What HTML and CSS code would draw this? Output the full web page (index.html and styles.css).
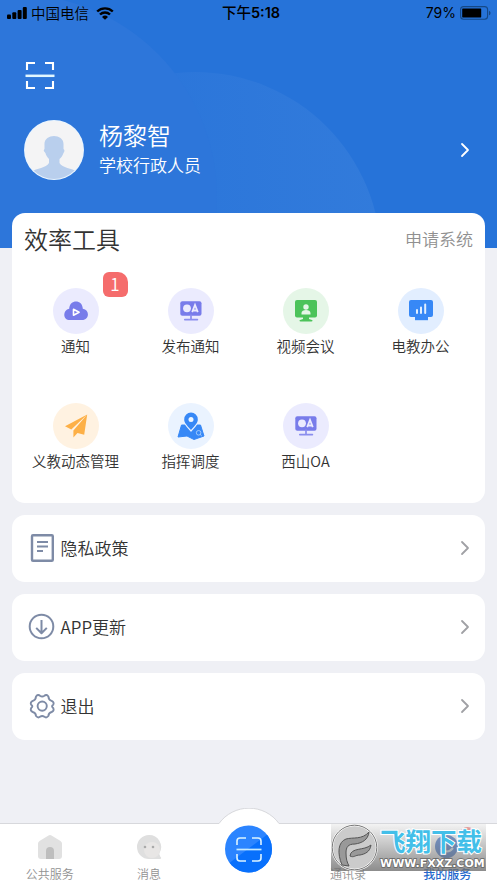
FILE: index.html
```html
<!DOCTYPE html>
<html lang="zh-CN">
<head>
<meta charset="utf-8">
<title>我的服务</title>
<link rel="stylesheet" href="styles.css">
</head>
<body>
<svg width="0" height="0" class="defs">
  <symbol id="oa" viewBox="0 0 22 20"><rect x=".3" y=".3" width="21.2" height="14.4" rx="2" fill="#787cea"/><circle cx="7" cy="7.3" r="3.9" fill="#ebebfe"/><path d="M12.2 11.200 15 4l2.800 7.200M13.600 9.500h3" fill="none" stroke="#ebebfe" stroke-width="1.800"/><path d="M11 14v4M4.800 18.600h12.600" stroke="#8b8eee" stroke-width="1.700" stroke-linecap="round"/></symbol>
  <symbol id="arrow" viewBox="0 0 10 16"><path d="m2 2 6 6-6 6" fill="none" stroke="currentColor" stroke-width="1.800" stroke-linecap="round" stroke-linejoin="round"/></symbol>
</svg>
<main class="app">
  <header class="hero">
    <svg class="hero-bg" viewBox="0 0 497 248">
      <defs>
        <linearGradient id="g2" x1="0" x2="1"><stop offset=".3" stop-color="#2a75da"/><stop offset="1" stop-color="#327bdb"/></linearGradient>
      </defs>
      <circle cx="195" cy="258" r="186" fill="url(#g2)"/>
      <circle cx="14" cy="197" r="203" fill="#2d76da"/>
    </svg>
    <div class="status">
      <div class="carrier">
        <svg width="20" height="12" viewBox="0 0 20 12"><rect y="7.500" width="4" height="4.500" rx="1"/><rect x="5.300" y="5.300" width="4" height="6.700" rx="1"/><rect x="10.600" y="3" width="4" height="9" rx="1"/><rect x="15.800" width="4" height="12" rx="1"/></svg>
        <span>中国电信</span>
        <svg class="wifi" width="18" height="13" viewBox="0 0 18 13"><path d="M1.200 4.500a11.300 11.300 0 0 1 15.600 0M4 7.500a7.200 7.200 0 0 1 10 0" fill="none" stroke="#000" stroke-width="2.400"/><path d="M6 9.900a4.400 4.400 0 0 1 6 0l-3 2.900z"/></svg>
      </div>
      <span class="time">下午<b>5:18</b></span>
      <div class="power"><span>79%</span>
        <svg width="31" height="14" viewBox="0 0 31 14"><rect x=".6" y=".6" width="27" height="12.600" rx="3" fill="none" stroke="#154886" stroke-width="1.100"/><rect x="2.200" y="2.400" width="19" height="9" rx=".6"/><path d="M29 4.700c2 .8 2 3.800 0 4.600z" fill="#154886"/></svg>
      </div>
    </div>
    <svg class="scan" width="30" height="30" viewBox="0 0 30 30"><path d="M2 9V2h8M20 2h8v7M2 20v7h8M20 27h8v-7" fill="none" stroke="#fff" stroke-width="2.100"/><path d="M.5 14.800h29" stroke="#e2f7ff" stroke-width="2.500"/></svg>
    <section class="profile">
      <svg class="avatar" width="60" height="60" viewBox="0 0 60 60"><defs><clipPath id="ac"><circle cx="30" cy="30" r="29"/></clipPath></defs><circle cx="30" cy="30" r="30" fill="#e9f5ff"/><circle cx="30" cy="30" r="29" fill="#f4f4f5"/><path clip-path="url(#ac)" d="M20.500 25c-1-12 20-12 19 0v4c1 1 1.500 2 0 4-1 3-2.500 5-4 6v4c3 5 12 5 18 9v10H7V52c6-4 15-4 18-9v-4c-2-2-3-4-3.600-6-2-2-2-3-.9-4z" fill="#b9cfed"/></svg>
      <div class="who"><div class="name">杨黎智</div><div class="role">学校行政人员</div></div>
      <svg class="chev" width="10" height="16"><use href="#arrow"/></svg>
    </section>
  </header>

  <section class="card tools">
    <div class="tools-head"><h1>效率工具</h1><a>申请系统</a></div>
    <div class="grid">
      <div class="tool"><div class="disc lilac"><svg width="24" height="20" viewBox="0 0 24 20"><path d="M5.200 7.800C5.500-2 18.500-2 18.800 7.800 26 9 25.500 19 18 19H6C-1.500 19-1.500 9 5.200 7.800z" fill="#787cea"/><path d="M9.500 8.300v6l5.600-3z" fill="#787cea" stroke="#fff" stroke-width="1.600" stroke-linejoin="round"/></svg><i class="badge">1</i></div><span>通知</span></div>
      <div class="tool"><div class="disc lilac"><svg width="22" height="20"><use href="#oa"/></svg></div><span>发布通知</span></div>
      <div class="tool"><div class="disc green"><svg width="22" height="22" viewBox="0 0 22 22"><rect width="22" height="17.500" rx="2" fill="#4cc35a"/><path d="M8 17h6v2l3 1c1 .5.500 1.500-.5 1.500h-11c-1 0-1.500-1-.5-1.500l3-1z" fill="#4cc35a"/><circle cx="11" cy="7" r="2.700" fill="#e5f6e7"/><path d="M6.500 14.500V13c0-2 2-3 4.500-3s4.500 1 4.500 3v1.500z" fill="#e5f6e7"/></svg></div><span>视频会议</span></div>
      <div class="tool"><div class="disc blue"><svg width="24" height="21" viewBox="0 0 24 21"><rect width="24" height="17" rx="2" fill="#3788f6"/><path d="M6 17h13v3.200H6z" fill="#3788f6"/><path d="M8 13v-3M12 13V7.500M16.200 13V4.500" stroke="#e2efff" stroke-width="2" stroke-linecap="round"/></svg></div><span>电教办公</span></div>
      <div class="tool"><div class="disc orange"><svg width="24" height="24" viewBox="0 0 24 24"><path d="M23.200.5 1 12.300l6.300 3.200zM23.200.5 9.400 16.500v7l4.100-4.500 6.700 1.800z" fill="#fdb047"/></svg></div><span>义教动态管理</span></div>
      <div class="tool"><div class="disc sky"><svg width="28" height="28" viewBox="0 0 28 28"><path d="M4.500 13h19l3.500 11-10 3.500-7-3.500-9 1z" fill="#3788f6" stroke="#3788f6" stroke-linejoin="round"/><path d="M14 18C9.500 13 7.200 10.500 7.200 7.400a6.800 6.800 0 0 1 13.600 0C20.800 10.500 18.500 13 14 18z" fill="#3788f6" stroke="#eaf3ff" stroke-width="2.600" paint-order="stroke"/><circle cx="14" cy="7.500" r="2.500" fill="#eef6ff"/><circle cx="21.600" cy="20.800" r="2.300" fill="none" stroke="#b4d5fd" stroke-width=".8"/><path d="m23.200 22.500 1.400 1.300" stroke="#b4d5fd"/></svg></div><span>指挥调度</span></div>
      <div class="tool"><div class="disc lilac"><svg width="22" height="20"><use href="#oa"/></svg></div><span>西山OA</span></div>
    </div>
  </section>

  <section class="card row"><svg class="lead" width="28" height="28" viewBox="0 0 28 28"><rect x="4" y="1.300" width="20.800" height="25.400" rx="1" fill="none" stroke="#7e8ba6" stroke-width="2.400"/><path d="M9 8h11M9 12.500h11M9 17h6" stroke="#7e8ba6" stroke-width="2.200"/></svg><span>隐私政策</span><svg class="chev" width="10" height="16"><use href="#arrow"/></svg></section>
  <section class="card row"><svg class="lead" width="28" height="28" viewBox="0 0 28 28"><circle cx="13.500" cy="13.500" r="11.800" fill="none" stroke="#7e8ba6" stroke-width="2"/><path d="M13.500 7v13M8.200 14.900l5.300 5.300 5.300-5.300" fill="none" stroke="#7e8ba6" stroke-width="2" stroke-linejoin="round"/></svg><span>APP更新</span><svg class="chev" width="10" height="16"><use href="#arrow"/></svg></section>
  <section class="card row"><svg class="lead" width="28" height="28" viewBox="0 0 28 28"><path d="M8 4.500q2-2.500 4-.8 2.200 1.500 4.400 0 2-1.700 4 .8.200 3.500 3.200 4.300 3 1.500 1.600 4-2.300 1.500 0 3.200 1.400 2.800-1.600 4-3 .8-3.200 4-2 2.300-4 .8-2.200-1.500-4.400 0-2 1.500-4-.8-.2-3.200-3.200-4-3-1.200-1.600-4 2.300-1.700 0-3.200-1.400-2.500 1.600-4Q7.800 8 8 4.500z" fill="none" stroke="#7e8ba6" stroke-width="1.900" stroke-linejoin="round"/><circle cx="14.200" cy="14.100" r="4.600" fill="none" stroke="#7e8ba6" stroke-width="1.900"/></svg><span>退出</span><svg class="chev" width="10" height="16"><use href="#arrow"/></svg></section>

  <nav class="tabs">
    <svg class="bump" width="62" height="17" viewBox="0 0 62 17"><path d="M0 17V15.500h1A37 37 0 0 1 61 15.500h1V17z" fill="#fff"/><path d="M0 15.500h1A37 37 0 0 1 61 15.500h1" fill="none" stroke="#d7d8dc"/></svg>
    <div class="tab"><svg width="26" height="26" viewBox="0 0 26 26"><path d="M1 9.500q0-1.500 1.500-2.500L11.500 1.400q1.500-.8 3 0L23.500 7Q25 8 25 9.500V22q0 3-3 3H4q-3 0-3-3z" fill="#e1e1e1"/><path d="M9 25V17q0-4 4-4t4 4v8z" fill="#bebebe"/></svg><span>公共服务</span></div>
    <div class="tab"><svg width="26" height="26" viewBox="0 0 26 26"><path d="M13 1a12 12 0 0 1 10.500 18c-.5 1 .500 3 1.500 4.500.5 1-.5 1.500-1.500 1.500H13A12 12 0 0 1 13 1z" fill="#dfdfdf"/><circle cx="16" cy="16" r="8" fill="#e8e6e5"/><circle cx="9" cy="13" r="1.300" fill="#aaa"/><circle cx="17" cy="13" r="1.300" fill="#aaa"/></svg><span>消息</span></div>
    <div class="tab mid"><svg width="48" height="48" viewBox="0 0 48 48"><defs><clipPath id="mc"><circle cx="24.500" cy="24" r="23.500"/></clipPath></defs><g clip-path="url(#mc)"><path fill="#2b84ff" d="M0 0h48v48H0z"/><path d="M0 42 48 6v42H0z" fill="#0870fc"/></g><path d="M13 20v-4q0-3 3-3h6M28 13h6q3 0 3 3v4M13 29v4q0 3 3 3h6M28 36h6q3 0 3-3v-4" fill="none" stroke="#dcf3ff" stroke-width="1.600"/><path d="M12.500 24.500h25" stroke="#c5eaff" stroke-width="1.700"/></svg></div>
    <div class="tab"><div class="gap"></div><span>通讯录</span></div>
    <div class="tab active"><svg width="26" height="26" viewBox="0 0 26 26"><circle cx="12.500" cy="12.500" r="11.500" fill="#326cc9"/><path d="M7 14q6 7 12 0" stroke="#d8eafa" stroke-width="2" fill="none"/></svg><i class="dot"></i><span>我的服务</span></div>
  </nav>

  <aside class="mark">
    <svg class="seal" width="47" height="47" viewBox="0 0 47 47"><circle cx="23.500" cy="23.500" r="22.300" fill="#cbcbcb" stroke="#fff" stroke-width="2"/><circle cx="23.500" cy="23.500" r="22.300" fill="none" stroke="#777" stroke-width="1"/><path d="M11 41C6 29 7 18 15 15c7-2 16 1 23-7-1 8-7 11-14 12-7 0-9 3-9 9 0 6 1 9 3 13zM19 32c1-9 14-5 21-11-1 7-6 9-11 10-5 0-6 3-10 1z" fill="#999" stroke="#555" stroke-width="1"/></svg>
    <div class="mark-text"><b class="mark-cn">飞翔下载</b><b class="mark-url">WWW.FXXZ.COM</b></div>
  </aside>
</main>
</body>
</html>
```
FILE: styles.css
```css
* { box-sizing: border-box; }
body { margin: 0; background: #eff0f5; font-family: "Noto Sans CJK SC", sans-serif; font-weight: 350; color: #333; }
svg { display: block; flex: none; }
i { font-style: normal; }
.defs { position: absolute; }
.app { position: relative; width: 497px; height: 883px; overflow: hidden; display: flex; flex-direction: column; }

.hero { position: relative; height: 248px; background: #2673d9; flex: none; }
.hero-bg { position: absolute; inset: 0; width: 497px; height: 248px; }
.status { position: relative; height: 26px; display: grid; grid-template-columns: 1fr auto 1fr; align-items: center; padding: 0 6px 0 7px; color: #000; font-size: 14.5px; line-height: 26px; }
.carrier { display: flex; align-items: center; gap: 4px; }
.wifi { margin-left: 3px; }
.time { margin-left: 4px; font-weight: 500; font-family: Inter, "Noto Sans CJK SC", sans-serif; }
.time b { font-weight: 600; }
.power { display: flex; align-items: center; justify-content: flex-end; gap: 4px; font-family: Inter, sans-serif; font-weight: 400; font-size: 14px; }
.scan { position: relative; margin: 35px 0 0 25px; }
.profile { position: relative; display: flex; align-items: center; margin: 29px 27px 0 24px; height: 60px; color: #fff; }
.who { flex: 1; margin: -4px 0 0 15px; }
.name { font-size: 24px; line-height: 32px; }
.role { font-size: 17px; line-height: 27px; }

.card { background: #fff; border-radius: 13px; margin: 0 12px 12.5px; flex: none; }
.tools { position: relative; height: 290px; margin-top: -35.5px; }
.tools-head { display: flex; align-items: center; justify-content: space-between; height: 52px; padding: 0 12px; }
h1 { margin: 0; font-size: 24px; font-weight: 350; }
.tools-head a { font-size: 17px; color: #909090; }
.grid { display: grid; grid-template-columns: repeat(4, 115px); grid-auto-rows: 115px; padding: 23.4px 0 0 6px; }
.tool { display: flex; flex-direction: column; align-items: center; font-size: 14.5px; line-height: 24px; white-space: nowrap; }
.disc { position: relative; width: 46px; height: 46px; border-radius: 50%; display: grid; place-items: center; }
.lilac { background: #ebebfe; }
.green { background: #e5f6e7; }
.blue { background: #e2eeff; }
.orange { background: #fff2e1; }
.sky { background: #eaf3ff; }
.badge { position: absolute; left: 50px; top: -16px; width: 25px; height: 25px; border-radius: 6px 10px 6px 6px; background: #f56c6c; color: #fff; text-align: center; font-size: 17px; line-height: 24px; }

.row { height: 66.6px; display: flex; align-items: center; padding: 0 15px 0 16px; font-size: 17px; }
.row span { flex: 1; margin-left: 4.5px; padding-bottom: 2px; }
.row .chev { color: #a0a1a5; }

.tabs { position: absolute; left: 0; right: 0; bottom: 0; height: 60px; display: grid; grid-template-columns: repeat(5, 1fr); background: #fff; border-top: 1px solid #d7d8dc; }
.tab { position: relative; display: flex; flex-direction: column; align-items: center; padding-top: 10px; font-size: 12px; line-height: 18px; color: #929292; }
.tab span { margin-top: 5px; }
.mid { padding-top: 1px; }
.gap { height: 26px; }
.active { color: #2468cc; font-weight: 500; }
.bump { position: absolute; left: 218px; top: -16px; }
.dot { position: absolute; left: 62px; top: 3px; width: 15px; height: 15px; border-radius: 50%; background: #ed7474; }

.mark { position: absolute; left: 331px; top: 824px; width: 155px; height: 47px; display: flex; background: linear-gradient(rgba(225, 225, 225, .4), rgba(112, 112, 112, .8)); }
.mark-text { display: flex; flex-direction: column; align-items: flex-start; white-space: nowrap; margin-left: 2px; }
.mark-cn { font-size: 25.5px; line-height: 31px; height: 34px; font-weight: 700; color: #43bfe9; -webkit-text-stroke: 2px #fff; paint-order: stroke fill; }
.mark-url { font-family: "DejaVu Sans", sans-serif; font-size: 11px; line-height: 11px; color: #fff; -webkit-text-stroke: 1.5px #666; paint-order: stroke fill; }
```
